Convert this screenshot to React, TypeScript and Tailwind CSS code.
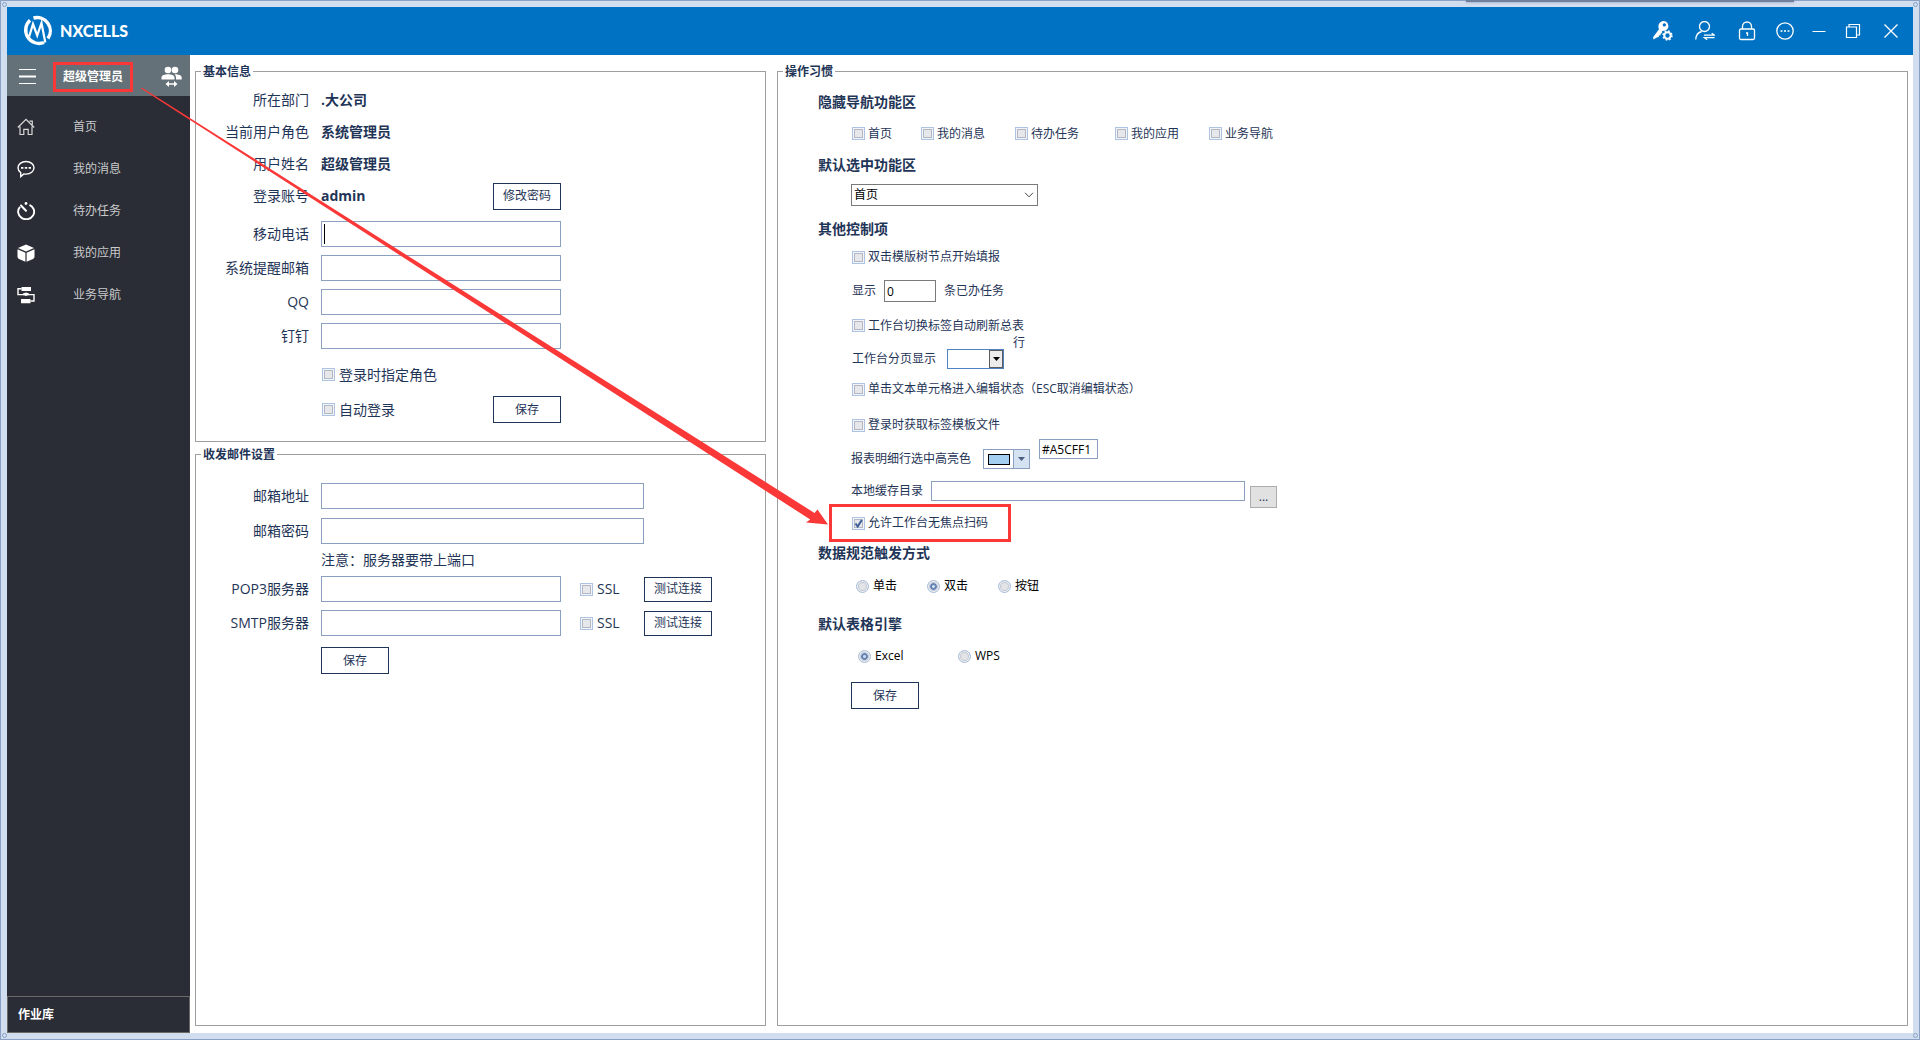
import React, { useState } from 'react';

type NavItem = { label: string; icon: React.ReactNode };

const navItems: NavItem[] = [
    {
        label: '首页',
        icon: (
            <svg viewBox="0 0 18 18" className="size-[18px]" fill="none" stroke="#d8d8d8" strokeWidth="1.2">
                <path d="M.8 9.5 9 1.3l8.2 8.2M12.5 3.2h2.8v3.6M3 8.5v8h3.8v-5.2h4.4v5.2H15v-8" />
            </svg>
        ),
    },
    {
        label: '我的消息',
        icon: (
            <svg viewBox="0 0 18 18" className="size-[18px]" fill="none" stroke="#fff" strokeWidth="1.4">
                <path d="M9 1.5c4.6 0 8 2.8 8 6.3s-3.4 6.3-8 6.3c-.8 0-1.500-.1-2.200-.2L3.800 16.600l-.1-4C2 11.400 1 9.700 1 7.800c0-3.500 3.400-6.300 8-6.300z" />
                <path d="M4 7.800h2.400M7.800 7.800h2.400M11.600 7.800H14" strokeWidth="1.8" />
            </svg>
        ),
    },
    {
        label: '待办任务',
        icon: (
            <svg viewBox="0 0 18 18" className="size-[18px]" fill="none" stroke="#fff" strokeWidth="1.9">
                <path d="M12.5 2.800a8 7.600 0 1 1-9.500 2" />
                <path d="M4 3.500 9 8.800" strokeWidth="2" strokeLinecap="round" />
                <circle cx="9" cy="1.5" r="1.4" fill="#fff" stroke="none" />
            </svg>
        ),
    },
    {
        label: '我的应用',
        icon: (
            <svg viewBox="0 0 18 18" className="size-[18px]" fill="#fff">
                <path d="M9 .5 17 4 9 7.600 1 4z" />
                <path d="M.5 5.200 8.400 8.700v9L2 15Q.5 14.300.5 12.800zM17.500 5.200 9.600 8.700v9L16 15q1.500-.7 1.500-2.200z" />
            </svg>
        ),
    },
    {
        label: '业务导航',
        icon: (
            <svg viewBox="0 0 18 18" className="size-[18px]" fill="#fff">
                <path d="M4.500 1h9.500v4H4.500zM6 7.500l3-1 3 1v1.500l-3 1-3-1zM4 13h9.500v4.300H4z" />
                <path d="M4.500 2.800H1v5.800h6M11 8.600h6v6.400h-3.500" fill="none" stroke="#fff" strokeWidth="1.4" />
            </svg>
        ),
    },
];

const hiddenZones = [
    { label: '首页', width: 'w-[69px]' },
    { label: '我的消息', width: 'w-[94px]' },
    { label: '待办任务', width: 'w-[100px]' },
    { label: '我的应用', width: 'w-[94px]' },
    { label: '业务导航', width: 'w-[94px]' },
];

const Logo: React.FC = () => (
    <div className="flex items-center gap-[7px] text-white">
        <svg viewBox="0 0 32 32" className="size-8" fill="none" stroke="currentColor">
            <path d="M9 5.200A13.400 13.400 0 0 0 23 27.500" strokeWidth="3.4" />
            <path d="M12.500 3A13.400 13.400 0 0 1 27 23.500" strokeWidth="3.4" />
            <path d="M8.200 21.500 12 9l4.200 11.500L20.500 8l3.800 19.500" strokeWidth="2.2" />
        </svg>
        <span className="font-['Lato','Noto_Sans_CJK_SC',sans-serif] text-base font-black">NXCELLS</span>
    </div>
);

const WindowTools: React.FC = () => (
    <div className="flex items-center gap-[14px] text-white">
        <div className="flex items-center gap-[22px]">
            <button type="button" aria-label="密码设置" className="size-5">
                <svg viewBox="0 0 20 20" className="size-5" fill="currentColor">
                    <path
                        fillRule="evenodd"
                        d="M10.500 0a5 5 0 0 1 3.800 8.200c-1.300 1.400-3 2-4.600 1.600l-1 1.300.6 1-1.500.5-.3 1.600-1.600.3-.2 1.500-1.900.5L.4 18.500.2 16 6 8.300C4.300 4.500 6.400.3 10.500 0zm.8 2.200a1.700 1.700 0 1 0 .1 3.400 1.700 1.700 0 0 0-.1-3.400z"
                    />
                    <circle cx="14.5" cy="14.5" r="3.2" fill="none" stroke="currentColor" strokeWidth="2" />
                    <circle cx="14.5" cy="14.5" r="4.4" fill="none" stroke="currentColor" strokeWidth="1.6" strokeDasharray="1.73" />
                </svg>
            </button>
            <button type="button" aria-label="切换用户" className="size-5">
                <svg viewBox="0 0 20 20" className="size-5" fill="none" stroke="currentColor" strokeWidth="1.3">
                    <circle cx="9.5" cy="5.5" r="5" />
                    <path d="M.7 18.500c.3-4.500 2.500-7.200 6-8M9 14.200h10.500l-2.800-2M19.500 16.700H9.500l2.600 2" />
                </svg>
            </button>
            <button type="button" aria-label="锁定" className="size-5">
                <svg viewBox="0 0 20 20" className="size-5" fill="none" stroke="currentColor" strokeWidth="1.3">
                    <rect x="2.5" y="8" width="15" height="10.5" rx="1.5" />
                    <path d="M5.500 8V5.500a4.500 4.500 0 0 1 9 0V8M9 12h1.500v3" />
                </svg>
            </button>
        </div>
        <button type="button" aria-label="更多" className="ml-1 size-5">
            <svg viewBox="0 0 20 20" className="size-5" fill="none" stroke="currentColor" strokeWidth="1.3">
                <circle cx="10" cy="10" r="8.2" />
                <path d="M5.500 10h2M9 10h2M12.500 10h2" />
            </svg>
        </button>
        <button type="button" aria-label="最小化" className="size-5">
            <svg viewBox="0 0 20 20" className="size-5" stroke="currentColor">
                <path d="M3.500 10.500h13" />
            </svg>
        </button>
        <button type="button" aria-label="还原" className="size-5">
            <svg viewBox="0 0 20 20" className="size-5" fill="none" stroke="currentColor">
                <path d="M3.500 6h10v10.500h-10zM6 5.500v-2h10.500v10.500H14" strokeWidth="1.2" />
            </svg>
        </button>
        <button type="button" aria-label="关闭" className="ml-1 size-5">
            <svg viewBox="0 0 20 20" className="size-5" stroke="currentColor" strokeWidth="1.3">
                <path d="m3.500 3.500 13 13M16.500 3.500l-13 13" />
            </svg>
        </button>
    </div>
);

const Sidebar: React.FC = () => (
    <aside className="flex w-[183px] shrink-0 flex-col bg-[#2a2d35]">
        <div className="flex h-[41px] items-center bg-[#657178] pt-0.5 pr-2 pl-3">
            <button type="button" aria-label="菜单">
                <svg viewBox="0 0 17 15" className="h-[15px] w-[17px]" stroke="#fff">
                    <path d="M0 .5h17M0 14.500h17" />
                    <path d="M0 7.500h17" strokeWidth="2" />
                </svg>
            </button>
            <span className="ml-[17px] flex h-[30px] w-20 items-center justify-center border-3 border-[#fb3838] text-xs font-bold text-white">
                超级管理员
            </span>
            <button type="button" aria-label="切换角色" className="ml-auto">
                <svg viewBox="0 0 21 21" className="size-[21px]" fill="#fff">
                    <circle cx="7" cy="4" r="3.3" />
                    <circle cx="14" cy="4" r="3.3" />
                    <path d="M.5 13.500v-2c0-2 3.300-3.200 6.500-3.200s6.500 1.200 6.500 3.200v2zM14 8.300c3.500 0 6.700 1.200 6.700 3.200v2h-5.700v-2c0-1.300-.6-2.300-1.500-3.200z" />
                    <path d="M4.500 18 8 15v2.200h5V15l3.500 3-3.500 3v-2.200H8V21z" />
                </svg>
            </button>
        </div>
        <nav className="flex flex-1 flex-col pt-[10px]">
            {navItems.map((item) => (
                <a key={item.label} href="#" className="flex h-[42px] items-center gap-[38px] pl-[10px] text-xs text-[#c9cacc]">
                    {item.icon}
                    {item.label}
                </a>
            ))}
        </nav>
        <a href="#" className="flex h-[37px] items-center border border-[#6b6966] pl-[10px] text-xs font-bold text-white">
            作业库
        </a>
    </aside>
);

const Check: React.FC<{ label: string; checked?: boolean; large?: boolean }> = ({ label, checked = false, large }) => {
    const [on, setOn] = useState(checked);
    return (
        <label className={large ? 'flex items-center gap-1 text-sm' : 'flex items-center gap-[3px] text-xs'}>
            <span className="grid shrink-0">
                <input
                    type="checkbox"
                    checked={on}
                    onChange={() => setOn(!on)}
                    className="col-start-1 row-start-1 size-[13px] appearance-none border border-[#aec3e2] bg-[#e6e7ea] shadow-[inset_0_0_0_1px_#f1f4f8,inset_0_0_0_2px_#b3b8c2]"
                />
                {on && (
                    <svg viewBox="0 0 13 13" className="pointer-events-none col-start-1 row-start-1 size-[13px]" fill="none">
                        <path d="m3.500 6.500 2.200 3L9.800 3" stroke="#3f5f9a" strokeWidth="2" />
                    </svg>
                )}
            </span>
            {label}
        </label>
    );
};

const Radio: React.FC<{ name: string; label: string; checked?: boolean }> = ({ name, label, checked }) => (
    <label className="flex items-center gap-1 text-xs text-black">
        <input
            type="radio"
            name={name}
            defaultChecked={checked}
            className="size-[13px] shrink-0 appearance-none rounded-full border border-[#a9bddb] bg-[#e3e4e7] shadow-[inset_0_0_0_1px_#eef1f6,inset_0_0_0_2px_#c3c8d0] checked:bg-[radial-gradient(circle,#c9daf0_1px,#6482b4_2px,#6482b4_3px,#e6ecf5_4px)]"
        />
        {label}
    </label>
);

const PlainButton: React.FC<{ children: React.ReactNode; short?: boolean }> = ({ children, short }) => (
    <button
        type="button"
        className={
            short
                ? 'h-[25px] w-[68px] shrink-0 border border-[#1f3557] bg-white text-xs'
                : 'h-[27px] w-[68px] shrink-0 border border-[#1f3557] bg-white text-xs'
        }
    >
        {children}
    </button>
);

const Panel: React.FC<{ title: string; className: string; children: React.ReactNode }> = ({ title, className, children }) => (
    <fieldset className={`min-w-0 border border-[#9f9f9f] ${className}`}>
        <legend className="ml-[5px] px-0.5 pt-0.5 text-xs leading-[14px] font-bold">{title}</legend>
        {children}
    </fieldset>
);

const InfoRow: React.FC<{ label: string; children: React.ReactNode }> = ({ label, children }) => (
    <div className="flex h-8 items-center gap-3">
        <span className="w-[113px] shrink-0 text-right">{label}</span>
        <div className="flex w-60 items-center justify-between font-bold">{children}</div>
    </div>
);

const FieldRow: React.FC<{ id: string; label: string; wide?: boolean; type?: string; children?: React.ReactNode }> = ({
    id,
    label,
    wide,
    type = 'text',
    children,
}) => (
    <div className={wide ? 'flex h-[35px] items-center' : 'flex h-[34px] items-center'}>
        <label htmlFor={id} className="mr-3 w-[113px] shrink-0 text-right">
            {label}
        </label>
        <input
            id={id}
            type={type}
            className={
                wide
                    ? 'h-[26px] w-[323px] border border-[#8ba0bf] bg-white px-1'
                    : 'h-[26px] w-60 border border-[#8ba0bf] bg-white px-1'
            }
        />
        {children}
    </div>
);

const Heading: React.FC<{ children: React.ReactNode }> = ({ children }) => (
    <h2 className="flex h-6 items-center text-sm font-bold">{children}</h2>
);

const BasicInfo: React.FC = () => (
    <Panel title="基本信息" className="pt-[5px] pb-[14px] text-sm">
        <InfoRow label="所在部门">.大公司</InfoRow>
        <InfoRow label="当前用户角色">系统管理员</InfoRow>
        <InfoRow label="用户姓名">超级管理员</InfoRow>
        <InfoRow label="登录账号">
            admin
            <span className="flex font-normal">
                <PlainButton>修改密码</PlainButton>
            </span>
        </InfoRow>
        <div className="relative mt-[5px]">
            <FieldRow id="phone" label="移动电话" />
            <span className="absolute top-[7px] left-[128px] h-5 w-px bg-black" />
        </div>
        <FieldRow id="mail" label="系统提醒邮箱" />
        <FieldRow id="qq" label="QQ" />
        <FieldRow id="ding" label="钉钉" />
        <div className="mt-1 ml-[126px] flex h-[35px] items-center">
            <Check label="登录时指定角色" large />
        </div>
        <div className="ml-[126px] flex h-[35px] w-[239px] items-center justify-between">
            <Check label="自动登录" large />
            <PlainButton>保存</PlainButton>
        </div>
    </Panel>
);

const MailSettings: React.FC = () => (
    <Panel title="收发邮件设置" className="flex-1 pt-4 text-sm">
        <FieldRow id="address" label="邮箱地址" wide />
        <FieldRow id="password" label="邮箱密码" type="password" wide />
        <p className="flex h-6 items-center pl-[125px]">注意：服务器要带上端口</p>
        {['POP3', 'SMTP'].map((server) => (
            <FieldRow key={server} id={server} label={`${server}服务器`}>
                <div className="ml-[19px] flex w-[132px] items-center justify-between">
                    <Check label="SSL" large />
                    <PlainButton short>测试连接</PlainButton>
                </div>
            </FieldRow>
        ))}
        <div className="mt-[7px] pl-[125px]">
            <PlainButton>保存</PlainButton>
        </div>
    </Panel>
);

const Habits: React.FC = () => {
    const [color, setColor] = useState('#A5CFF1');

    return (
        <Panel title="操作习惯" className="flex-1 pt-[11px] text-xs">
            <div className="pl-10">
                <Heading>隐藏导航功能区</Heading>
                <div className="flex h-[39px] items-center pl-[34px]">
                    {hiddenZones.map((zone) => (
                        <div key={zone.label} className={zone.width}>
                            <Check label={zone.label} />
                        </div>
                    ))}
                </div>

                <Heading>默认选中功能区</Heading>
                <div className="flex h-9 items-center pl-[33px]">
                    <div className="grid items-center">
                        <select
                            aria-label="默认选中功能区"
                            className="col-start-1 row-start-1 h-[22px] w-[187px] appearance-none border border-[#7a7a7a] bg-white pl-0.5 text-black"
                        >
                            <option>首页</option>
                            <option>我的消息</option>
                        </select>
                        <svg viewBox="0 0 10 6" className="pointer-events-none col-start-1 row-start-1 mr-1 h-1.5 w-2.5 justify-self-end" fill="none" stroke="#444">
                            <path d="m1 .8 4 4 4-4" />
                        </svg>
                    </div>
                </div>

                <div className="pt-1">
                    <Heading>其他控制项</Heading>
                </div>
                <div className="pl-[34px]">
                    <div className="flex h-8 items-center">
                        <Check label="双击模版树节点开始填报" />
                    </div>
                    <div className="flex h-9 items-center gap-2">
                        <label htmlFor="count">显示</label>
                        <input id="count" type="text" defaultValue="0" className="h-[22px] w-[52px] border border-[#7a7a7a] bg-white px-0.5 text-black" />
                        <span>条已办任务</span>
                    </div>
                    <div className="flex h-[33px] items-center">
                        <Check label="工作台切换标签自动刷新总表" />
                    </div>
                    <div className="relative flex h-[34px] items-center gap-[11px]">
                        <label htmlFor="paging">工作台分页显示</label>
                        <div className="grid items-center">
                            <select id="paging" className="col-start-1 row-start-1 h-5 w-[57px] appearance-none border border-[#4d83bf] bg-white">
                                <option></option>
                                <option>50</option>
                            </select>
                            <span className="pointer-events-none col-start-1 row-start-1 mr-px flex h-[18px] w-3.5 items-center justify-center justify-self-end border border-[#5c5c5c] bg-[#ececec]">
                                <svg viewBox="0 0 7 4" className="h-1 w-[7px]">
                                    <path d="M0 0h7L3.500 4z" />
                                </svg>
                            </span>
                        </div>
                        <span className="absolute -top-[7px] left-[161px] leading-4">行</span>
                    </div>
                    <div className="flex h-[26px] items-center">
                        <Check label="单击文本单元格进入编辑状态（ESC取消编辑状态）" />
                    </div>
                    <div className="mt-[9px] flex h-7 items-center">
                        <Check label="登录时获取标签模板文件" />
                    </div>
                </div>
                <div className="pl-[33px]">
                    <div className="flex h-10 items-center">
                        <label htmlFor="color">报表明细行选中高亮色</label>
                        <button type="button" aria-label="选择颜色" className="ml-3 flex h-5 w-[47px] border border-[#8ba0bf] bg-white">
                            <span className="flex h-full flex-1 items-center justify-center">
                                <span className="h-[11px] w-[22px] border border-black bg-[#a5cff1]" />
                            </span>
                            <span className="flex h-full w-4 items-center justify-center border-l border-[#8ba0bf] bg-[#d5e2f2]">
                                <svg viewBox="0 0 7 4" className="h-1 w-[7px]" fill="#4a5f80">
                                    <path d="M0 0h7L3.500 4z" />
                                </svg>
                            </span>
                        </button>
                        <input
                            id="color"
                            type="text"
                            value={color}
                            onChange={(e) => setColor(e.target.value)}
                            className="ml-[9px] h-5 w-[59px] self-start border border-[#8ba0bf] bg-white pl-0.5 text-black"
                        />
                    </div>
                    <div className="flex h-[30px] items-start pt-0.5">
                        <label htmlFor="cache" className="mr-2 leading-5">
                            本地缓存目录
                        </label>
                        <input id="cache" type="text" className="h-5 w-[314px] border border-[#8ba0bf] bg-white px-1" />
                        <button type="button" className="mt-[5px] ml-[5px] h-[22px] w-[27px] border border-[#adadad] bg-[#e1e1e1]">
                            ...
                        </button>
                    </div>
                </div>
                <div className="relative flex h-7 items-center pl-[34px]">
                    <Check label="允许工作台无焦点扫码" checked />
                    <span className="pointer-events-none absolute -top-[5px] left-[11px] h-[38px] w-[182px] border-3 border-[#fb3838]" />
                </div>

                <div className="pt-1">
                    <Heading>数据规范触发方式</Heading>
                </div>
                <div className="flex h-[42px] items-center gap-[30px] pl-[38px]">
                    <Radio name="trigger" label="单击" />
                    <Radio name="trigger" label="双击" checked />
                    <Radio name="trigger" label="按钮" />
                </div>

                <div className="pt-[5px]">
                    <Heading>默认表格引擎</Heading>
                </div>
                <div className="flex h-10 items-center pl-10">
                    <div className="w-[100px]">
                        <Radio name="engine" label="Excel" checked />
                    </div>
                    <Radio name="engine" label="WPS" />
                </div>
                <div className="pt-1.5 pl-[33px]">
                    <PlainButton>保存</PlainButton>
                </div>
            </div>
        </Panel>
    );
};

const App: React.FC = () => {
    return (
        <div className="relative flex min-h-screen flex-col border border-[#8aa1c5] bg-[#d1deef] p-1.5 font-['Open_Sans','Noto_Sans_CJK_SC',sans-serif] text-[#1f3557]">
            <header className="flex h-12 items-center justify-between bg-[#0072c3] pr-3 pl-[14px]">
                <Logo />
                <WindowTools />
            </header>

            <div className="flex flex-1 bg-white">
                <Sidebar />
                <main className="flex flex-1 gap-[11px] px-[5px] pt-2 pb-[7px]">
                    <div className="flex w-[571px] shrink-0 flex-col gap-1">
                        <BasicInfo />
                        <MailSettings />
                    </div>
                    <Habits />
                </main>
            </div>

            {/* resize grips of the window frame */}
            <span className="absolute top-px left-px size-[5px] rounded-sm border border-[#8aa1c5]" />
            <span className="absolute top-px right-px size-[5px] rounded-sm border border-[#8aa1c5]" />
            <span className="absolute bottom-px left-px size-[5px] rounded-sm border border-[#8aa1c5]" />
            <span className="absolute right-px bottom-px size-[5px] rounded-sm border border-[#8aa1c5]" />
            <span className="absolute -top-px right-[125px] h-0.5 w-[328px] bg-[#6f7f9e] shadow-[0_0_3px_#7d8aa5]" />

            <svg viewBox="141 88 690 440" className="pointer-events-none absolute top-[87px] left-[140px] h-[440px] w-[690px]" fill="#fb3838">
                <path d="m141 88.500.7-1L814.500 513l3-3.500L828 524.500 806 522.500l4.200-3z" />
            </svg>
        </div>
    );
};

export default App;
